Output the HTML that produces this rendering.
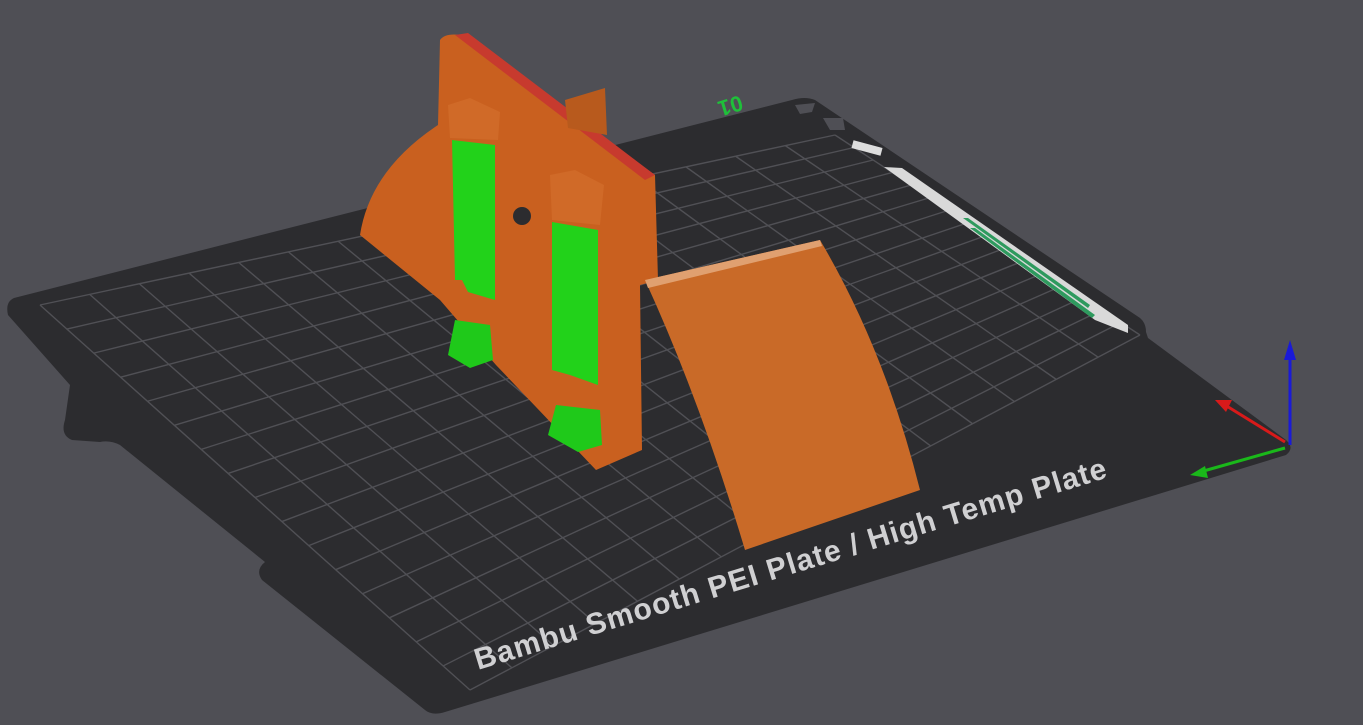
<!DOCTYPE html>
<html><head><meta charset="utf-8"><style>
html,body{margin:0;padding:0;background:#4f4f55;overflow:hidden}
svg{display:block}
</style></head><body>
<svg id="s" width="1363" height="725" viewBox="0 0 1363 725" xmlns="http://www.w3.org/2000/svg">
<rect width="1363" height="725" fill="#4f4f55"/>
<path d="M14,298 L792,100 Q805,96 815,100 L1140,318 Q1146,323 1146,332 L1148,338 L1286,440 Q1295,448 1286,455 L445,712 Q432,716 425,710 L262,580 Q255,570 265,562 L120,445 Q110,440 100,442 L72,440 Q60,435 65,420 L70,385 L8,315 Q5,302 14,298 Z" fill="#2c2c2f"/>
<g id="grid" stroke="#505055" stroke-width="1.4" fill="none"></g>
<polygon points="795,105 815,103 812,112 800,114" fill="#4f4f55"/>
<polygon points="823,118 843,118 845,130 830,130" fill="#4f4f55"/>
<polygon points="884,167 902,168 1128,325 1128,333 1095,320" fill="#d9d9d9"/>
<polygon points="963,218 968,218 1090,305 1088,308" fill="#2e9a5e"/>
<polygon points="970,228 975,228 1095,315 1092,318" fill="#2e9a5e"/>
<rect x="852" y="144" width="30" height="8" fill="#ddd" transform="rotate(15 867 148)"/>
<path d="M360,235 Q370,170 438,125 L440,40 Q445,33 460,35 L655,175 L658,280 L640,285 L642,450 L596,470 L496,365 L440,300 Z" fill="#c9601f"/>
<polygon points="455,35 468,33 655,175 645,180" fill="#c73a2e"/>
<polygon points="565,100 605,88 607,135 568,128" fill="#b85a1d"/>
<circle cx="522" cy="216" r="9" fill="#2c2c2f"/>
<path d="M645,280 L820,240 Q885,350 920,490 L745,550 Q700,400 645,280 Z" fill="#c96a28"/>
<path d="M645,280 L820,240 L822,246 L648,288 Z" fill="#e0a070"/>
<polygon points="452,140 495,145 495,300 468,292 462,280 455,280" fill="#22d21a"/>
<polygon points="455,320 490,325 493,360 470,368 448,355" fill="#1fc91a"/>
<polygon points="552,222 598,230 598,385 570,375 552,370" fill="#22d21a"/>
<polygon points="556,405 600,410 602,445 578,452 548,435" fill="#1fc91a"/>
<polygon points="448,105 470,98 500,112 498,140 450,138" fill="#d06a28"/>
<polygon points="550,175 575,170 604,185 600,225 552,220" fill="#d06a28"/>
<line x1="1290" y1="445" x2="1290" y2="350" stroke="#1a1ad8" stroke-width="3"/>
<polygon points="1284,360 1296,360 1290,340" fill="#1a1ad8"/>
<line x1="1285" y1="442" x2="1225" y2="405" stroke="#d81a1a" stroke-width="3"/>
<polygon points="1232,400 1226,412 1215,400" fill="#d81a1a"/>
<line x1="1285" y1="448" x2="1200" y2="472" stroke="#1ab81a" stroke-width="3"/>
<polygon points="1205,466 1208,478 1190,475" fill="#1ab81a"/>
<text x="0" y="0" transform="translate(478,670) rotate(-17)" font-family="Liberation Sans, sans-serif" font-weight="bold" font-size="30" letter-spacing="1.1" fill="#d0d0d2">Bambu Smooth PEI Plate / High Temp Plate</text>
<text x="0" y="0" transform="translate(740,95) rotate(163)" font-family="Liberation Sans, sans-serif" font-weight="bold" font-size="22" fill="#1fc03a">01</text>
</svg>
<script>
var g=document.getElementById('grid');
var A=[40,305],B=[835,135],C=[1140,335],D=[470,690];
function L(p,q,t){return [p[0]+(q[0]-p[0])*t,p[1]+(q[1]-p[1])*t];}
var n=16,h='';
for(var i=0;i<=n;i++){var t=i/n;
var p=L(A,B,t),q=L(D,C,t);h+='<line x1="'+p[0]+'" y1="'+p[1]+'" x2="'+q[0]+'" y2="'+q[1]+'"/>';
p=L(A,D,t);q=L(B,C,t);h+='<line x1="'+p[0]+'" y1="'+p[1]+'" x2="'+q[0]+'" y2="'+q[1]+'"/>';}
g.innerHTML=h;
</script>
</body></html>
